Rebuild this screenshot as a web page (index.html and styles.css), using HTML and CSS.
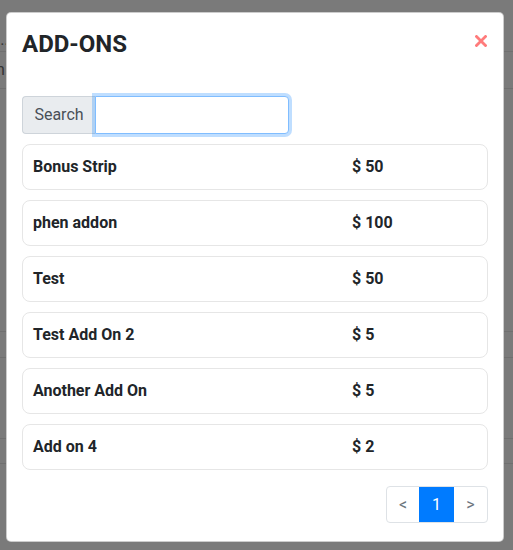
FILE: index.html
```html
<!DOCTYPE html>
<html>
<head>
<meta charset="utf-8">
<link rel="stylesheet" href="styles.css">
</head>
<body>
<div class="backdrop">
  <div class="bg-dots">...</div>
  <div class="bg-n">n</div>
</div>
<div class="modal">
  <div class="modal-header">
    <h2 class="title">ADD-ONS</h2>
    <button class="close" aria-label="Close">
      <svg width="12" height="12" viewBox="0 0 12 12"><path d="M1.5 1.5 L10.5 10.5 M10.5 1.5 L1.5 10.5" stroke="#ff7b7b" stroke-width="2.8" stroke-linecap="square"/></svg>
    </button>
  </div>
  <div class="modal-body">
    <div class="search-group">
      <span class="addon">Search</span>
      <input class="search-input" type="text">
    </div>
    <ul class="list">
      <li class="item"><span class="name">Bonus Strip</span><span class="price">$ 50</span></li>
      <li class="item"><span class="name">phen addon</span><span class="price">$ 100</span></li>
      <li class="item"><span class="name">Test</span><span class="price">$ 50</span></li>
      <li class="item"><span class="name">Test Add On 2</span><span class="price">$ 5</span></li>
      <li class="item"><span class="name">Another Add On</span><span class="price">$ 5</span></li>
      <li class="item"><span class="name">Add on 4</span><span class="price">$ 2</span></li>
    </ul>
    <div class="pager-row">
      <ul class="pagination">
        <li class="page prev">&lt;</li>
        <li class="page active">1</li>
        <li class="page next">&gt;</li>
      </ul>
    </div>
  </div>
</div>
</body>
</html>
```
FILE: styles.css
```css
* { box-sizing: border-box; }
html, body { margin: 0; padding: 0; }
body {
  width: 513px;
  height: 550px;
  overflow: hidden;
  background-color: #7a7a7a;
  background-image:
    linear-gradient(#6f6f6f, #6f6f6f),
    linear-gradient(#6f6f6f, #6f6f6f),
    linear-gradient(#6f6f6f, #6f6f6f),
    linear-gradient(#6f6f6f, #6f6f6f),
    linear-gradient(#6f6f6f, #6f6f6f),
    linear-gradient(#6f6f6f, #6f6f6f);
  background-repeat: no-repeat;
  background-size: 100% 1px;
  background-position: 0 51px, 0 88px, 0 331px, 0 357px, 0 438px, 0 463px;
  font-family: Roboto, "Liberation Sans", Arial, sans-serif;
  color: #212529;
  position: relative;
}
.backdrop { position: absolute; inset: 0; color: #333; font-size: 16px; }
.bg-dots { position: absolute; left: -4px; top: 30px; }
.bg-n { position: absolute; left: -4px; top: 60px; }
.modal {
  position: absolute;
  left: 6px;
  top: 12px;
  width: 498px;
  height: 530px;
  background: #fff;
  border: 1px solid rgba(0,0,0,0.2);
  border-radius: 5px;
  display: flex;
  flex-direction: column;
}
.modal-header {
  display: flex;
  justify-content: space-between;
  align-items: flex-start;
  padding: 17px 15px 0 15px;
}
.title {
  margin: 0;
  font-size: 24px;
  line-height: 1.2;
  font-weight: 700;
}
.close {
  border: 0;
  background: none;
  padding: 0;
  margin: 5px 1px 0 0;
  width: 12px;
  height: 12px;
  display: block;
  cursor: pointer;
}
.close svg { display: block; }
.modal-body {
  padding: 37px 15px 0 15px;
  display: flex;
  flex-direction: column;
}
.search-group {
  display: flex;
  height: 38px;
}
.addon {
  width: 73px;
  display: flex;
  align-items: center;
  justify-content: center;
  background: #e9ecef;
  border: 1px solid #ced4da;
  border-right: 0;
  border-radius: 4px 0 0 4px;
  font-size: 16px;
  color: #495057;
}
.search-input {
  width: 194px;
  height: 38px;
  margin: 0;
  border: 1px solid #80bdff;
  border-radius: 0 4px 4px 0;
  box-shadow: 0 0 0 3px rgba(0,123,255,0.25);
  outline: none;
  font-size: 16px;
  padding: 6px 12px;
}
.list {
  list-style: none;
  margin: 10px 0 0 0;
  padding: 0;
  display: flex;
  flex-direction: column;
  gap: 10px;
}
.item {
  height: 46px;
  border: 1px solid #e6e6e6;
  border-radius: 8px;
  display: grid;
  grid-template-columns: 319px 1fr;
  align-items: center;
  padding: 0 10px;
  font-size: 16px;
  font-weight: 700;
}
.pager-row {
  display: flex;
  justify-content: flex-end;
  margin-top: 16px;
}
.pagination {
  list-style: none;
  margin: 0;
  padding: 0;
  display: flex;
  height: 37px;
  border: 1px solid #dee2e6;
  border-radius: 4px;
  overflow: hidden;
}
.page {
  display: flex;
  align-items: center;
  justify-content: center;
  font-size: 16px;
  color: #6c757d;
}
.prev { width: 32px; }
.active { width: 35px; background: #007bff; color: #fff; }
.next { width: 33px; }
```
